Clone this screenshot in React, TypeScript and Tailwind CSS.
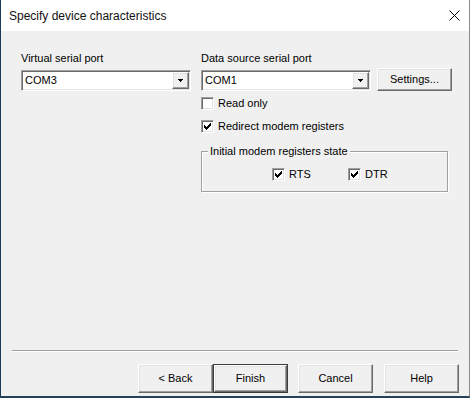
import React from 'react';

const raised =
	'bg-[#f0f0f0] border border-t-white border-l-white border-r-[#696969] border-b-[#696969] shadow-[inset_-1px_-1px_0_#a0a0a0,inset_1px_1px_0_#e3e3e3]';

const sunken =
	'border border-t-[#a0a0a0] border-l-[#a0a0a0] border-r-white border-b-white shadow-[inset_1px_1px_0_#696969,inset_-1px_-1px_0_#e3e3e3]';

const CheckBox = ({ checked, label }: { checked?: boolean; label: string }) => (
	<div className="flex items-center h-[13px]">
		<span className={`block w-[13px] h-[13px] bg-white shrink-0 ${sunken}`}>
			{checked && (
				<svg width="11" height="11" className="block" shapeRendering="crispEdges">
					<rect x="8" y="2" width="1" height="1" fill="#000" />
					<rect x="7" y="3" width="2" height="1" fill="#000" />
					<rect x="2" y="4" width="1" height="1" fill="#000" />
					<rect x="6" y="4" width="3" height="1" fill="#000" />
					<rect x="2" y="5" width="2" height="1" fill="#000" />
					<rect x="5" y="5" width="3" height="1" fill="#000" />
					<rect x="2" y="6" width="5" height="1" fill="#000" />
					<rect x="3" y="7" width="3" height="1" fill="#000" />
					<rect x="4" y="8" width="1" height="1" fill="#000" />
				</svg>
			)}
		</span>
		<span className="ml-[4px] leading-[13px]">{label}</span>
	</div>
);

const Combo = ({ value }: { value: string }) => (
	<div className={`w-[170px] h-[21px] bg-white p-[1px] flex shrink-0 ${sunken}`}>
		<div className="flex-1 flex items-center pl-[2px] leading-[13px]">{value}</div>
		<div className={`w-[17px] flex items-center justify-center ${raised}`}>
			<svg width="5" height="3" shapeRendering="crispEdges">
				<rect x="0" y="0" width="5" height="1" fill="#000" />
				<rect x="1" y="1" width="3" height="1" fill="#000" />
				<rect x="2" y="2" width="1" height="1" fill="#000" />
			</svg>
		</div>
	</div>
);

const Button = ({ label, isDefault }: { label: string; isDefault?: boolean }) =>
	isDefault ? (
		<div className="w-[75px] h-[29px] border border-[#3c3c3c] flex">
			<div className={`flex-1 flex items-center justify-center ${raised}`}>{label}</div>
		</div>
	) : (
		<div className={`w-[75px] h-[29px] flex items-center justify-center ${raised}`}>{label}</div>
	);

export default function App() {
	return (
		<div
			className="w-[470px] h-[398px] flex flex-col border-l border-l-[#1c3a5a] border-r border-r-[#8a8a8a] border-b-2 border-b-[#25405c] text-[11px] text-black"
			style={{ fontFamily: '"Liberation Sans", Arial, sans-serif' }}
		>
			<div className="h-[31px] bg-white flex items-center justify-between pl-[8px] pr-[9px] shrink-0">
				<span className="text-[12px] text-[#111]">Specify device characteristics</span>
				<svg width="11" height="11" viewBox="0 0 11 11">
					<path d="M0.5 0.5 L10.5 10.5 M10.5 0.5 L0.5 10.5" stroke="#000" strokeWidth="1" />
				</svg>
			</div>

			<div className="flex-1 bg-[#f0f0f0] flex flex-col">
				<div className="flex pt-[21px] pl-[20px]">
					<div className="flex flex-col w-[170px]">
						<div className="leading-[13px]">Virtual serial port</div>
						<div className="mt-[5px]">
							<Combo value="COM3" />
						</div>
					</div>

					<div className="flex flex-col ml-[10px]">
						<div className="leading-[13px]">Data source serial port</div>
						<div className="flex items-start mt-[5px]">
							<Combo value="COM1" />
							<div className={`ml-[6px] -mt-[2px] w-[75px] h-[23px] flex items-center justify-center ${raised}`}>
								Settings...
							</div>
						</div>
						<div className="mt-[6px]">
							<CheckBox label="Read only" />
						</div>
						<div className="mt-[10px]">
							<CheckBox checked label="Redirect modem registers" />
						</div>

						<div className="relative mt-[18px] w-[247px] h-[41px] border border-t-[#a0a0a0] border-l-[#a0a0a0] border-r-[#a0a0a0] border-b-[#a0a0a0] shadow-[inset_1px_1px_0_#fff,1px_1px_0_#fff]">
							<span className="absolute left-[6px] -top-[7px] px-[2px] bg-[#f0f0f0] leading-[13px]">
								Initial modem registers state
							</span>
							<div className="flex pt-[16px] pl-[70px]">
								<div className="w-[76px]">
									<CheckBox checked label="RTS" />
								</div>
								<CheckBox checked label="DTR" />
							</div>
						</div>
					</div>
				</div>

				<div className="mt-auto flex flex-col">
					<div className="mx-[11px] h-[2px] border-t border-t-[#a0a0a0] border-b border-b-white" />
					<div className="flex justify-end mt-[12px] pr-[10px] pb-[3px]">
						<Button label="< Back" />
						<Button label="Finish" isDefault />
						<div className="ml-[10px]">
							<Button label="Cancel" />
						</div>
						<div className="ml-[11px]">
							<Button label="Help" />
						</div>
					</div>
				</div>
			</div>
		</div>
	);
}
